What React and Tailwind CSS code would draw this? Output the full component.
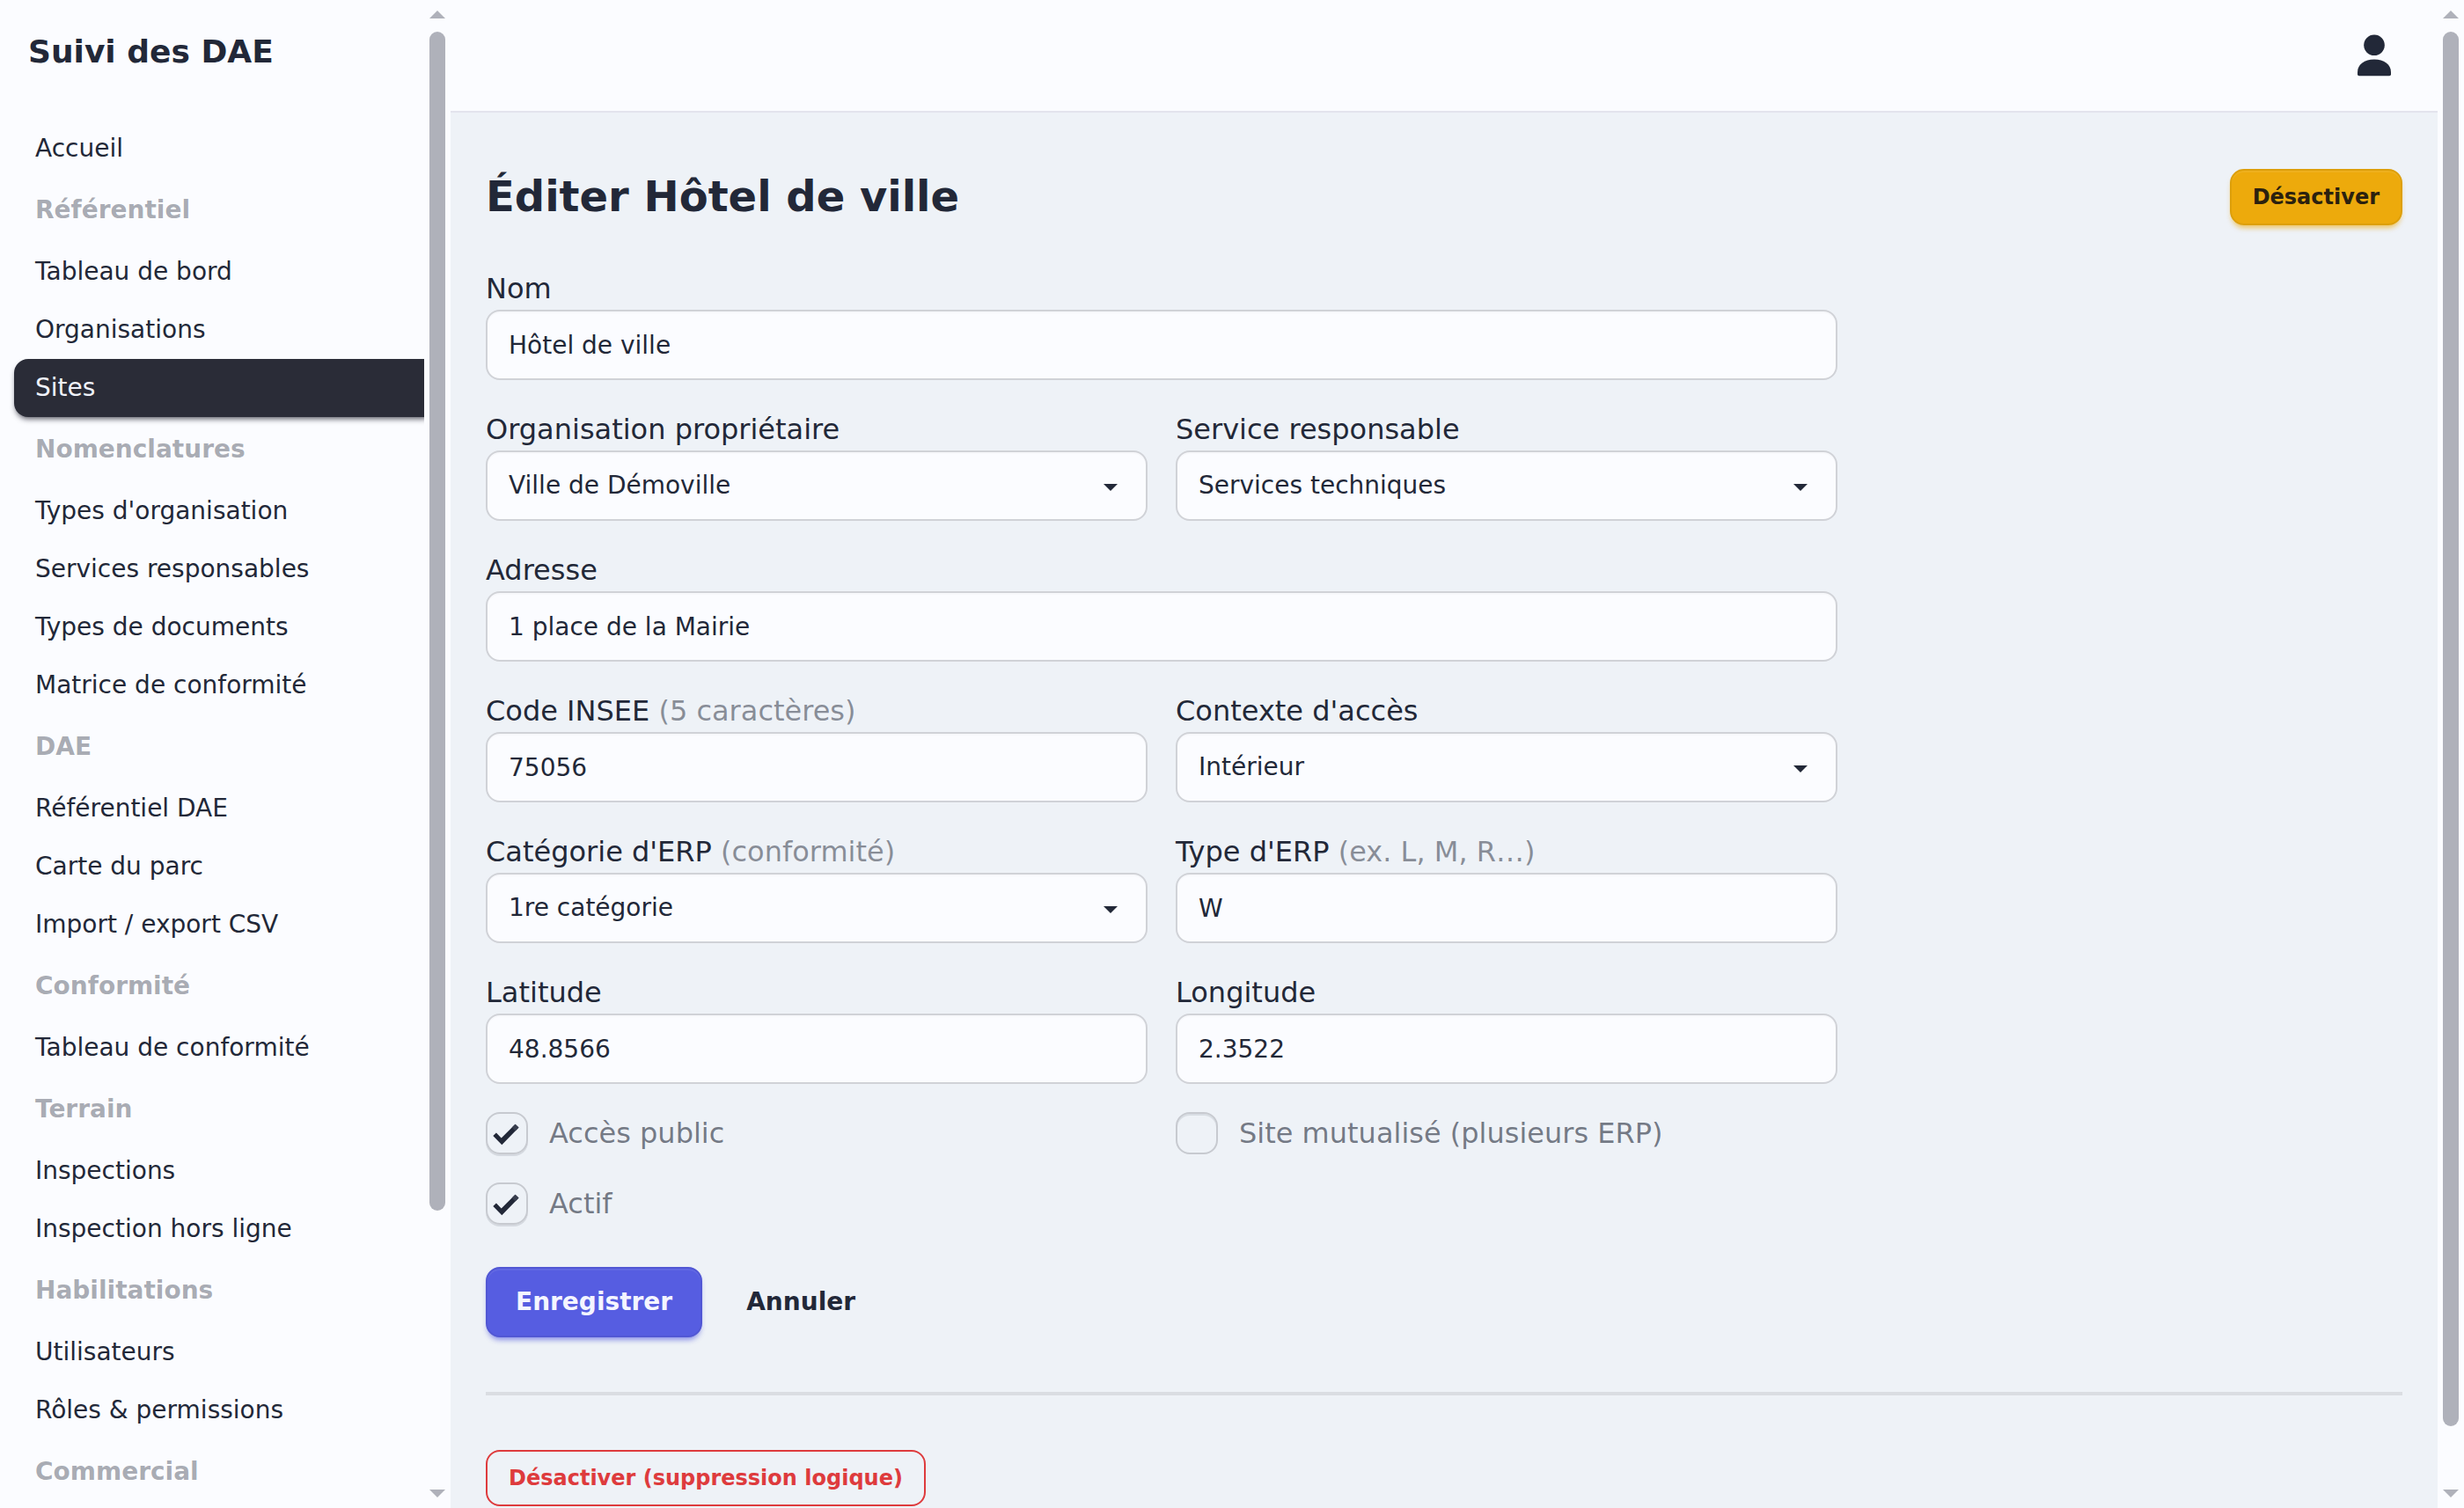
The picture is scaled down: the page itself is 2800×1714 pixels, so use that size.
import React from "react";

const nav = [
  { item: "Accueil" },
  { title: "Référentiel" },
  { item: "Tableau de bord" },
  { item: "Organisations" },
  { item: "Sites", active: true },
  { title: "Nomenclatures" },
  { item: "Types d'organisation" },
  { item: "Services responsables" },
  { item: "Types de documents" },
  { item: "Matrice de conformité" },
  { title: "DAE" },
  { item: "Référentiel DAE" },
  { item: "Carte du parc" },
  { item: "Import / export CSV" },
  { title: "Conformité" },
  { item: "Tableau de conformité" },
  { title: "Terrain" },
  { item: "Inspections" },
  { item: "Inspection hors ligne" },
  { title: "Habilitations" },
  { item: "Utilisateurs" },
  { item: "Rôles & permissions" },
  { title: "Commercial" },
];

function NavEntry({ entry }) {
  if (entry.title) {
    return (
      <li className="w-[480px] shrink-0 px-6 py-4 text-[28px] leading-[42px] font-bold text-[#222838]/40">
        {entry.title}
      </li>
    );
  }
  return (
    <li
      className={
        entry.active
          ? "w-[480px] shrink-0 rounded-2xl bg-[#2a2c37] px-6 py-3 text-[28px] leading-[42px] text-[#f0f2fa] shadow-[0_4px_6px_-2px_rgba(42,43,55,0.8)]"
          : "w-[480px] shrink-0 px-6 py-3 text-[28px] leading-[42px]"
      }
    >
      {entry.item}
    </li>
  );
}

function Scrollbar({ thumb }) {
  return (
    <div className="flex h-full w-[30px] shrink-0 flex-col items-center bg-[#fbfcff] py-3">
      <svg className="h-[9px] w-[18px] shrink-0 fill-[#afb1ba]" viewBox="0 0 18 9">
        <path d="M9 0 18 9H0Z" />
      </svg>
      <div className={`mt-[15px] w-[18px] shrink-0 rounded-full bg-[#afb1ba] ${thumb}`} />
      <svg className="mt-auto h-[9px] w-[18px] shrink-0 fill-[#afb1ba]" viewBox="0 0 18 9">
        <path d="M0 0H18L9 9Z" />
      </svg>
    </div>
  );
}

function Field({ label, hint, value, select, wide }) {
  return (
    <div className={wide ? "col-span-2 flex flex-col" : "flex flex-col"}>
      <span className="text-[32px] leading-[48px] whitespace-pre">
        {label}
        {hint && <span className="text-[#222838]/50"> {hint}</span>}
      </span>
      <div className="flex h-20 items-center justify-between rounded-2xl border-2 border-[#d0d2d7] bg-[#fbfcff] px-6 text-[28px] leading-[42px] shadow-[inset_0_2px_0_rgba(34,40,56,0.02)]">
        <span className={select ? "" : "pt-0.5"}>{value}</span>
        {select && (
          <svg className="mt-1 mr-2 h-2 w-4 fill-[#222838]" viewBox="0 0 16 8">
            <path d="M0 0H16L8 8Z" />
          </svg>
        )}
      </div>
    </div>
  );
}

function Check({ label, checked }) {
  return (
    <div className="flex h-12 items-center gap-6">
      <div
        className={
          checked
            ? "flex size-12 items-center justify-center rounded-2xl border-2 border-[#c7cad0] shadow-[0_2px_0_rgba(34,40,56,0.12)]"
            : "flex size-12 items-center justify-center rounded-2xl border-2 border-[#c7cad0] shadow-[inset_0_2px_0_rgba(34,40,56,0.1)]"
        }
      >
        {checked && (
          <svg className="size-8" viewBox="0 0 32 32">
            <path d="M0.300 19 3.900 15.500 9.700 21.500 25.500 5.800 29.500 9.400 10.300 29.300Z" fill="#222838" />
            <path d="M21.700 9.600 25.500 5.800 29.500 9.400 25.700 13.400Z" fill="#383e4e" />
          </svg>
        )}
      </div>
      <span className="text-[32px] leading-[48px] text-[#222838]/60">{label}</span>
    </div>
  );
}

export default function App() {
  return (
    <div className="flex h-[1714px] w-[2800px] overflow-hidden bg-[#eef2f7] font-['DejaVu_Sans',sans-serif] text-[#222838]">
      <aside className="flex w-[512px] shrink-0 bg-[#fbfcff]">
        <div className="flex w-[482px] flex-col overflow-hidden">
          <div className="h-[120px] shrink-0 px-8 py-8 text-[36px] leading-[54px] font-bold">Suivi des DAE</div>
          <ul className="flex flex-col pt-4 pl-4">
            {nav.map((entry) => (
              <NavEntry key={entry.title || entry.item} entry={entry} />
            ))}
          </ul>
        </div>
        <Scrollbar thumb="h-[1340px]" />
      </aside>

      <div className="flex min-w-0 flex-1 flex-col">
        <header className="flex h-32 shrink-0 items-center justify-end border-b-2 border-[#e3e4ed] bg-[#fbfcff] pr-[52px]">
          <svg className="h-12 w-10 fill-[#222838]" viewBox="0 0 40 48">
            <circle cx="20" cy="12.3" r="11.8" />
            <path d="M1 43C1 34 9 28.500 20 28.500S39 34 39 43V45.500Q39 47.300 37.200 47.300H2.800Q1 47.300 1 45.500Z" />
          </svg>
        </header>

        <main className="flex flex-col px-10 pt-16">
          <div className="flex h-16 items-center justify-between">
            <h1 className="pb-0.5 text-[48px] leading-[64px] font-bold">Éditer Hôtel de ville</h1>
            <button className="flex h-16 items-center rounded-2xl border-2 border-[#dd9f0b] bg-[#edaa0c] px-6 text-[24px] font-bold text-[#2b210f] shadow-[inset_0_2px_0_rgba(255,255,255,0.07),0_6px_6px_-4px_rgba(237,170,12,0.5),0_4px_6px_-2px_rgba(237,170,12,0.4)]">
              Désactiver
            </button>
          </div>

          <form className="mt-12 grid w-[1536px] grid-cols-2 gap-8">
            <Field label="Nom" value="Hôtel de ville" wide />
            <Field label="Organisation propriétaire" value="Ville de Démoville" select />
            <Field label="Service responsable" value="Services techniques" select />
            <Field label="Adresse" value="1 place de la Mairie" wide />
            <Field label="Code INSEE" hint="(5 caractères)" value="75056" />
            <Field label="Contexte d'accès" value="Intérieur" select />
            <Field label="Catégorie d'ERP" hint="(conformité)" value="1re catégorie" select />
            <Field label="Type d'ERP" hint="(ex. L, M, R…)" value="W" />
            <Field label="Latitude" value="48.8566" />
            <Field label="Longitude" value="2.3522" />
            <Check label="Accès public" checked />
            <Check label="Site mutualisé (plusieurs ERP)" />
            <Check label="Actif" checked />
          </form>

          <div className="mt-12 flex gap-4">
            <button className="flex h-20 items-center rounded-2xl border-2 border-[#5157d4] bg-[#565de1] px-8 text-[28px] font-bold text-[#f4f5ff] shadow-[inset_0_2px_0_rgba(255,255,255,0.07),0_6px_6px_-4px_rgba(86,93,225,0.5),0_4px_6px_-2px_rgba(86,93,225,0.4)]">
              Enregistrer
            </button>
            <button className="flex h-20 items-center border-2 border-transparent px-8 text-[28px] font-bold">Annuler</button>
          </div>

          <div className="mt-[62px] h-1 shrink-0 bg-[#dadde2]" />

          <button className="mt-[62px] flex h-16 shrink-0 items-center self-start rounded-2xl border-2 border-[#de3b3d] px-6 text-[24px] font-bold text-[#de3b3d]">
            Désactiver (suppression logique)
          </button>
        </main>
      </div>

      <Scrollbar thumb="h-[1585px]" />
    </div>
  );
}
